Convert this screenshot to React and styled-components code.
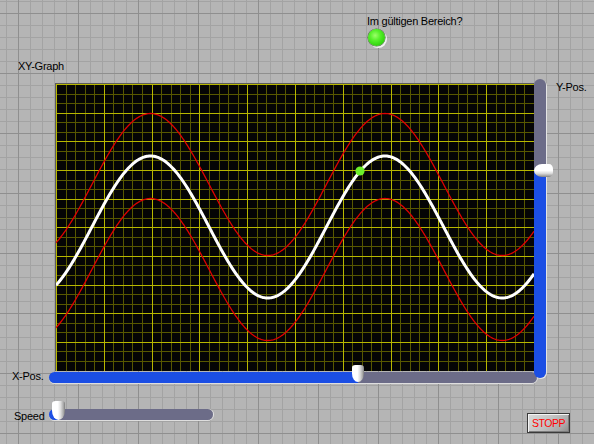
import React from "react";
import styled, { createGlobalStyle } from "styled-components";

const GlobalStyle = createGlobalStyle`
  html, body { margin: 0; padding: 0; background: #b5b5b5; }
  #root { width: 594px; height: 444px; }
`;

const Panel = styled.div`
  width: 594px;
  height: 444px;
  overflow: hidden;
  display: flex;
  flex-direction: column;
  font-family: "Liberation Sans", Arial, sans-serif;
  color: #000;
  background-color: #b5b5b5;
  background-image:
    linear-gradient(to right, #8f8f8f 0 1px, transparent 1px),
    linear-gradient(to bottom, #8f8f8f 0 1px, transparent 1px),
    linear-gradient(to right, #a3a3a3 0 1px, transparent 1px),
    linear-gradient(to bottom, #a3a3a3 0 1px, transparent 1px);
  background-size: 60px 60px, 60px 60px, 12px 12px, 12px 12px;
  background-position: 18px 0, 0 13px, 6px 0, 0 1px;
`;

const Label = styled.span`
  display: block;
  font-size: 11px;
  line-height: 13px;
  letter-spacing: -0.25px;
  white-space: nowrap;
`;

const IndicatorBlock = styled.div`
  margin: 14.6px 0 0 367px;
  display: flex;
  flex-direction: column;
  align-items: flex-start;
`;

const Led = styled.div`
  width: 17px;
  height: 17px;
  margin: 1px 0 0 1px;
  border-radius: 50%;
  background: radial-gradient(circle at 42% 38%, #9dff6a 0, #56f02a 35%, #33d410 70%, #24a808 100%);
  box-shadow: 0 0 0 0.6px #4e6e44, 1.6px 1.6px 0 0.4px #f2f2f2;
`;

const GraphTitle = styled(Label)`
  margin: 14px 0 0 18px;
`;

const GraphGrid = styled.div`
  margin-top: 6.4px;
  display: grid;
  grid-template-columns: 49px 6px 479px 12px 1fr;
  grid-template-rows: 4px 288px 12px;
`;

const Plot = styled.div`
  grid-column: 3;
  grid-row: 2;
  border-left: 1px solid #5c5c5c;
  border-top: 1px solid #5c5c5c;
  background: #000;
  display: flex;
  svg { display: block; }
`;

const XLabel = styled(Label)`
  grid-column: 1;
  grid-row: 3;
  padding-left: 12px;
  margin-top: -0.5px;
`;

const YLabel = styled(Label)`
  grid-column: 5;
  grid-row: 1 / 3;
  padding-left: 10px;
  margin-top: 2px;
`;

const XSlot = styled.div`
  grid-column: 2 / 5;
  grid-row: 3;
  margin-top: 1px;
  z-index: 1;
`;

const YSlot = styled.div`
  grid-column: 4;
  grid-row: 1 / 4;
  align-self: start;
  z-index: 2;
`;

const HTrack = styled.div`
  position: relative;
  display: flex;
  width: ${(p) => p.$length}px;
  height: 11px;
  border-radius: 6px;
  box-shadow: 0 1px 0 #dedede, 1px 0 0 #e4e4e4;
`;

const HFill = styled.div`
  background: #1b4ee4;
  border-radius: 6px 0 0 6px;
`;

const HRest = styled.div`
  flex: 1;
  background: #6c6c88;
  border-radius: 0 6px 6px 0;
`;

const HThumb = styled.div`
  position: absolute;
  top: ${(p) => p.$top}px;
  width: ${(p) => p.$w}px;
  height: ${(p) => p.$h}px;
  border-radius: 4px 4px 7px 7px / 3px 3px 10px 10px;
  background: linear-gradient(to right, #ffffff 0%, #ffffff 45%, #e0e0e0 65%, #a8a8a8 88%, #7c7c7c 100%);
`;

const VTrack = styled.div`
  position: relative;
  display: flex;
  flex-direction: column;
  width: 12px;
  height: ${(p) => p.$length}px;
  border-radius: 6px;
  box-shadow: 1px 1px 0 #e4e4e4;
`;

const VRest = styled.div`
  flex: 1;
  background: #6c6c88;
  border-radius: 6px 6px 0 0;
`;

const VFill = styled.div`
  background: #1b4ee4;
  border-radius: 0 0 6px 6px;
`;

const VThumb = styled.div`
  position: absolute;
  left: 0;
  width: 19px;
  height: 13px;
  border-radius: 8px 4px 4px 8px / 6.5px 5px 5px 6.5px;
  background: linear-gradient(to bottom, #ffffff 0%, #ffffff 50%, #dcdcdc 72%, #a0a0a0 92%, #808080 100%);
`;

const BottomRow = styled.div`
  margin-top: 17px;
  padding: 0 24px 0 14px;
  display: flex;
  align-items: flex-start;
`;

const SpeedLabel = styled(Label)`
  width: 35px;
  margin-top: 9.6px;
`;

const SpeedSlot = styled.div`
  margin-top: 9px;
`;

const StopButton = styled.button`
  margin: 13px 0 0 auto;
  width: 43px;
  height: 20px;
  padding: 0;
  border: 1px solid #3a3a3a;
  background: linear-gradient(135deg, #dadada 0%, #c4c4c4 45%, #a8a8a8 80%, #8a8a8a 100%);
  box-shadow: inset 1px 1px 0 #f4f4f4, inset -1px -1px 0 #7a7a7a;
  color: #ff0000;
  font-family: "Liberation Sans", Arial, sans-serif;
  font-size: 10.5px;
  letter-spacing: -0.5px;
  line-height: 18px;
  text-align: center;
`;

function HSlider({ length, fraction, thumbW, thumbH, thumbTop }) {
  const fill = length * fraction;
  return (
    <HTrack $length={length}>
      <HFill style={{ width: fill }} />
      <HRest />
      <HThumb $w={thumbW} $h={thumbH} $top={thumbTop} style={{ left: fill - thumbW / 2 }} />
    </HTrack>
  );
}

function VSlider({ length, fraction }) {
  const fill = length * fraction;
  return (
    <VTrack $length={length}>
      <VRest />
      <VFill style={{ height: fill }} />
      <VThumb style={{ top: length - fill - 6.5 }} />
    </VTrack>
  );
}

const W = 478;
const H = 287;

function wave(center) {
  const pts = [];
  for (let x = 0; x <= W; x += 1) {
    const y = center - 71 * Math.cos((2 * Math.PI * (x - 94.5)) / 234.5);
    pts.push(`${x},${y.toFixed(2)}`);
  }
  return "M" + pts.join(" L");
}

function Graph() {
  const vMinor = [];
  const vMajor = [];
  for (let k = 0; k <= 50; k++) {
    const x = Math.round(k * (W / 50)) + 0.5;
    (k % 5 === 0 ? vMajor : vMinor).push(x);
  }
  const hMinor = [];
  const hMajor = [];
  for (let k = 0; k <= 30; k++) {
    const y = Math.round(k * 9.55) + 0.5;
    (k % 3 === 0 ? hMajor : hMinor).push(y);
  }
  return (
    <svg width={W} height={H} viewBox={`0 0 ${W} ${H}`}>
      <rect width={W} height={H} fill="#050505" />
      <g stroke="#585800" strokeWidth="1" shapeRendering="crispEdges">
        {vMinor.map((x) => <line key={"vm" + x} x1={x} y1={0} x2={x} y2={H} />)}
        {hMinor.map((y) => <line key={"hm" + y} x1={0} y1={y} x2={W} y2={y} />)}
      </g>
      <g stroke="#b8b800" strokeWidth="1" shapeRendering="crispEdges">
        {vMajor.map((x) => <line key={"vM" + x} x1={x} y1={0} x2={x} y2={H} />)}
        {hMajor.map((y) => <line key={"hM" + y} x1={0} y1={y} x2={W} y2={y} />)}
      </g>
      <path d={wave(100.5)} fill="none" stroke="#e00000" strokeWidth="1.3" />
      <path d={wave(185.5)} fill="none" stroke="#e00000" strokeWidth="1.3" />
      <path d={wave(143)} fill="none" stroke="#ffffff" strokeWidth="3" />
      <circle cx="304" cy="87" r="4.6" fill="#6cf02a" />
    </svg>
  );
}

export default function App() {
  return (
    <>
      <GlobalStyle />
      <Panel>
        <IndicatorBlock>
          <Label>Im gültigen Bereich?</Label>
          <Led />
        </IndicatorBlock>
        <GraphTitle>XY-Graph</GraphTitle>
        <GraphGrid>
          <Plot>
            <Graph />
          </Plot>
          <YSlot>
            <VSlider length={299} fraction={207 / 299} />
          </YSlot>
          <YLabel>Y-Pos.</YLabel>
          <XLabel>X-Pos.</XLabel>
          <XSlot>
            <HSlider length={488} fraction={309 / 488} thumbW={12} thumbH={17} thumbTop={-7} />
          </XSlot>
        </GraphGrid>
        <BottomRow>
          <SpeedLabel>Speed</SpeedLabel>
          <SpeedSlot>
            <HSlider length={164} fraction={9.5 / 164} thumbW={13} thumbH={19} thumbTop={-8} />
          </SpeedSlot>
          <StopButton>STOPP</StopButton>
        </BottomRow>
      </Panel>
    </>
  );
}
